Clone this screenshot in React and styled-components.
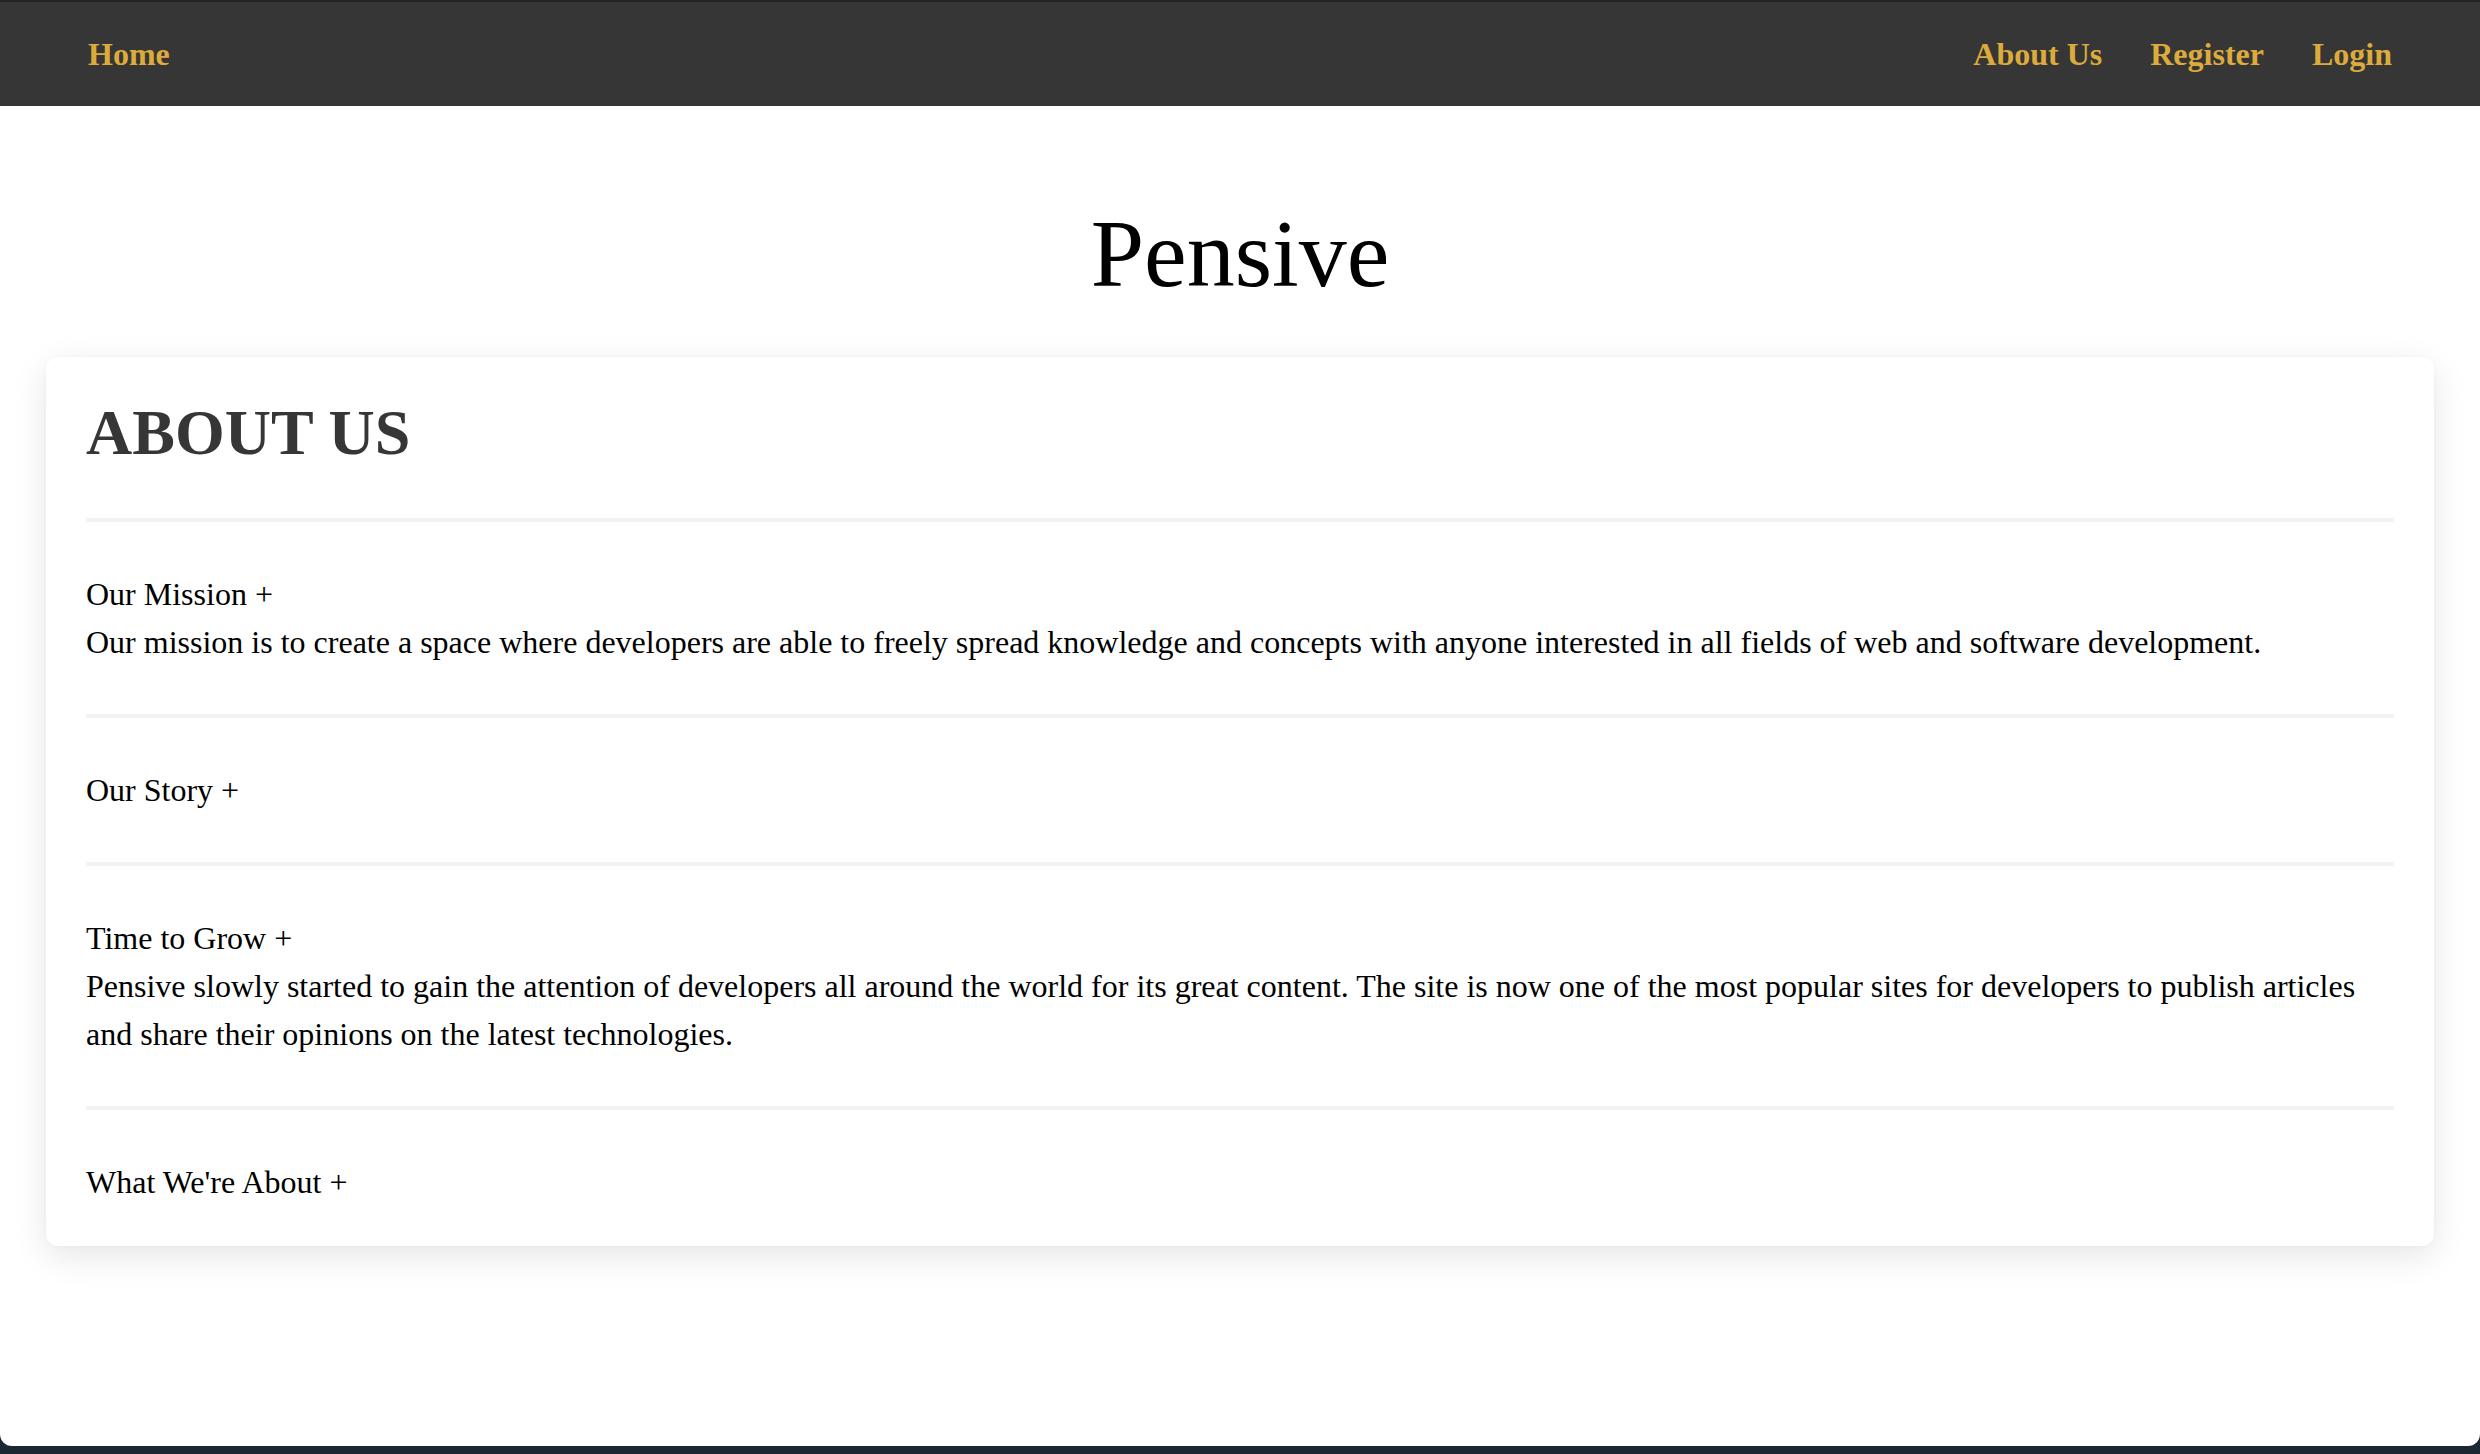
import React, { useState } from "react";
import styled, { createGlobalStyle } from "styled-components";

const GlobalStyle = createGlobalStyle`
  * {
    box-sizing: border-box;
  }
  body {
    margin: 0;
    background: #1d2731;
    font-family: "Liberation Serif", "Times New Roman", serif;
  }
`;

const Window = styled.div`
  min-height: 1446px;
  background: #ffffff;
  border-radius: 0 0 12px 12px;
  overflow: hidden;
`;

const Nav = styled.nav`
  height: 106px;
  border-top: 2px solid #232323;
  background: #363636;
  display: flex;
  align-items: center;
  justify-content: space-between;
  padding: 0 88px;
`;

const NavGroup = styled.div`
  display: flex;
  align-items: center;
  gap: 48px;
`;

const NavLink = styled.a`
  color: #dcab3c;
  font-size: 32px;
  font-weight: 700;
  text-decoration: none;
  cursor: pointer;

  &:hover {
    color: #f0c45a;
  }
`;

const Title = styled.h1`
  margin: 95px 0 50px;
  font-size: 96px;
  font-weight: 400;
  line-height: 1.1;
  text-align: center;
  color: #000;
`;

const Card = styled.section`
  margin: 0 46px;
  padding: 40px;
  background: #fff;
  border-radius: 12px;
  box-shadow: 0 10px 34px rgba(0, 0, 0, 0.1), 0 0 4px rgba(0, 0, 0, 0.03);
`;

const Heading = styled.h2`
  margin: 0 0 49px;
  font-size: 64px;
  font-weight: 700;
  line-height: 72px;
  color: #363636;
`;

const Item = styled.div`
  border-top: 4px solid #f2f2f2;
  padding: 48px 0;

  &:last-child {
    padding-bottom: 0;
  }
`;

const ItemTitle = styled.div`
  font-size: 32px;
  line-height: 48px;
  color: #000;
  cursor: pointer;
  user-select: none;
`;

const ItemBody = styled.p`
  margin: 0;
  font-size: 32px;
  line-height: 48px;
  color: #000;
`;

const sections = [
  {
    id: "mission",
    title: "Our Mission",
    text: "Our mission is to create a space where developers are able to freely spread knowledge and concepts with anyone interested in all fields of web and software development.",
  },
  {
    id: "story",
    title: "Our Story",
    text: "Pensive started as a small blog where a few developers shared what they learned while building their own projects.",
  },
  {
    id: "grow",
    title: "Time to Grow",
    text: "Pensive slowly started to gain the attention of developers all around the world for its great content. The site is now one of the most popular sites for developers to publish articles and share their opinions on the latest technologies.",
  },
  {
    id: "about",
    title: "What We're About",
    text: "We are about learning, sharing and growing together as a community of developers.",
  },
];

const App = () => {
  const [open, setOpen] = useState({ mission: true, grow: true });

  const toggle = (id) => setOpen((prev) => ({ ...prev, [id]: !prev[id] }));

  return (
    <>
      <GlobalStyle />
      <Window>
        <Nav>
          <NavLink>Home</NavLink>
          <NavGroup>
            <NavLink>About Us</NavLink>
            <NavLink>Register</NavLink>
            <NavLink>Login</NavLink>
          </NavGroup>
        </Nav>
        <Title>Pensive</Title>
        <Card>
          <Heading>ABOUT US</Heading>
          {sections.map((s) => (
            <Item key={s.id}>
              <ItemTitle onClick={() => toggle(s.id)}>{s.title} +</ItemTitle>
              {open[s.id] && <ItemBody>{s.text}</ItemBody>}
            </Item>
          ))}
        </Card>
      </Window>
    </>
  );
};

export default App;
